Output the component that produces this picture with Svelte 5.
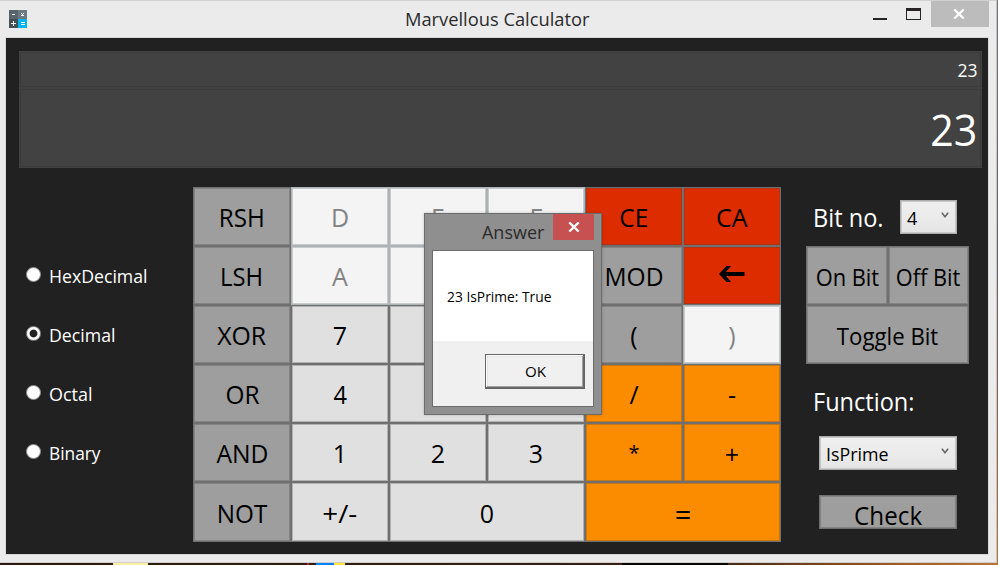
<script>
  const keys = [
    { t: 'RSH', k: 'op', w: 46 }, { t: 'D', k: 'off' }, { t: 'E', k: 'off' }, { t: 'F', k: 'off' }, { t: 'CE', k: 'red', w: 29 }, { t: 'CA', k: 'red', w: 31.5 },
    { t: 'LSH', k: 'op', w: 43 }, { t: 'A', k: 'off' }, { t: 'B', k: 'off' }, { t: 'C', k: 'off' }, { t: 'MOD', k: 'op', w: 59 }, { t: '', k: 'red', arrow: true },
    { t: 'XOR', k: 'op', w: 49 }, { t: '7', k: 'num' }, { t: '8', k: 'num' }, { t: '9', k: 'num' }, { t: '(', k: 'op' }, { t: ')', k: 'off' },
    { t: 'OR', k: 'op', w: 34 }, { t: '4', k: 'num', w: 13.5 }, { t: '5', k: 'num' }, { t: '6', k: 'num' }, { t: '/', k: 'math' }, { t: '-', k: 'math' },
    { t: 'AND', k: 'op', w: 52 }, { t: '1', k: 'num' }, { t: '2', k: 'num' }, { t: '3', k: 'num' }, { t: '*', k: 'math', small: true }, { t: '+', k: 'math', low: true },
    { t: 'NOT', k: 'op', w: 50.5 }, { t: '+/-', k: 'num', w: 35 }, { t: '0', k: 'num', wide: true }, { t: '=', k: 'math', wide: true, big: true }
  ];
  const modes = [
    { t: 'HexDecimal', w: 98.5 },
    { t: 'Decimal', w: 66.5 },
    { t: 'Octal', w: 43.5 },
    { t: 'Binary', w: 51.5 }
  ];
  let mode = $state('Decimal');

  // Condenses a label horizontally to the given advance width.
  function fit(node, w) {
    if (!w) return;
    node.style.transform = `scaleX(${w / node.getBoundingClientRect().width})`;
  }
</script>

{#snippet chevron()}
  <svg class="chev" width="8" height="7" viewBox="0 0 8 7"><path d="M0.6 0.6 L1.8 0.6 L4 3.4 L6.2 0.6 L7.4 0.6 L7.4 1.8 L4 6 L0.6 1.8Z" fill="#666" /></svg>
{/snippet}

<div class="desktop">
  <div class="window">
    <header>
      <svg class="logo" width="18" height="18" viewBox="0 0 18 18" shape-rendering="crispEdges">
        <rect width="9" height="9" fill="#56646c" /><rect x="9" width="9" height="9" fill="#6c7a82" />
        <rect y="9" width="9" height="9" fill="#444f56" /><rect x="9" y="9" width="9" height="9" fill="#00b4f4" />
        <path d="M3 4h3v1h-3zM12 3h1v1h-1zM14 3h1v1h-1zM13 4h1v1h-1zM12 5h3v1h-3zM2 13h5v1h-5zM4 11h1v5h-1zM12 12h4v1h-4zM12 14h4v1h-4z" fill="#fff" />
      </svg>
      <h1><span class="lab left" use:fit={184.5}>Marvellous Calculator</span></h1>
      <svg class="min" width="14" height="2"><rect width="14" height="2" fill="#262226" /></svg>
      <svg class="max" width="15" height="12"><path d="M0 0h15v12h-15zM1 3v8h13v-8z" fill="#262226" fill-rule="evenodd" /></svg>
      <button class="close" aria-label="Close"><svg width="12" height="10" viewBox="0 0 12 10"><path d="M1.3 0.5L10.7 9.5M10.7 0.5L1.3 9.5" stroke="#fff" stroke-width="2.3" /></svg></button>
    </header>
    <main>
      <section class="display">
        <div class="history"><span class="lab right" use:fit={20}>23</span></div>
        <div class="result"><span class="lab right" use:fit={47}>23</span></div>
      </section>
      <div class="body">
        <div class="modes">
          {#each modes as m}
            <button class="mode" onclick={() => (mode = m.t)}>
              <i class:on={mode === m.t}></i><span class="lab left" use:fit={m.w}>{m.t}</span>
            </button>
          {/each}
        </div>
        <div class="pad">
          {#each keys as key}
            <button class="key {key.k}" class:wide={key.wide} class:big={key.big} class:small={key.small} class:low={key.low}>
              {#if key.arrow}
                <svg width="26" height="16" viewBox="0 0 26 16"><path d="M0 8L7.5 0H12L7 6H25.5V10H7L12 16H7.5Z" fill="#000" /></svg>
              {:else}<span class="lab" use:fit={key.w}>{key.t}</span>{/if}
            </button>
          {/each}
        </div>
        <aside>
          <div class="bitrow">
            <span class="head"><span class="lab left" use:fit={70.5}>Bit no.</span></span>
            <button class="select bit"><span class="lab left">4</span>{@render chevron()}</button>
          </div>
          <div class="bits">
            <button class="key op"><span class="lab" use:fit={63.5}>On Bit</span></button>
            <button class="key op"><span class="lab" use:fit={64.5}>Off Bit</span></button>
            <button class="key op wide"><span class="lab" use:fit={101.5}>Toggle Bit</span></button>
          </div>
          <div class="head fn"><span class="lab left" use:fit={101.5}>Function:</span></div>
          <button class="select func"><span class="lab left" use:fit={62.5}>IsPrime</span>{@render chevron()}</button>
          <button class="key op check"><span class="lab" use:fit={68}>Check</span></button>
        </aside>
      </div>
    </main>
  </div>
  <div class="dialog">
    <div class="dtitle">
      <span class="lab" use:fit={62.5}>Answer</span>
      <button class="dclose" aria-label="Close"><svg width="12" height="10" viewBox="0 0 12 10"><path d="M1.3 0.5L10.7 9.5M10.7 0.5L1.3 9.5" stroke="#fff" stroke-width="2.3" /></svg></button>
    </div>
    <div class="dbody">
      <p><span class="lab left" use:fit={104.5}>23 IsPrime: True</span></p>
      <div class="dfoot"><button class="ok"><span class="lab" use:fit={21}>OK</span></button></div>
    </div>
  </div>
</div>

<style>
  :global(body) { overflow: hidden; }
  .desktop, .desktop * { box-sizing: border-box; }
  .desktop {
    position: relative; width: 998px; height: 565px; padding-right: 1px;
    font-family: "Open Sans", "Noto Sans", sans-serif; color: #fff;
    background:
      linear-gradient(90deg, transparent 113px, #fdeea0 113px 148px, transparent 148px 307px, #c8203c 307px 309px, transparent 309px 316px, #0a80f8 316px 334px, #ffe43c 334px 345px, transparent 345px 622px, #080402 622px 728px, transparent 728px) 0 563px / 997px 2px no-repeat,
      linear-gradient(90deg, #2a190e, #3a2012 70%, #a05a24 90%, #b87434) 0 563px / 997px 2px no-repeat,
      linear-gradient(#77747c, #66606c 45%, #8a6250 70%, #b87434);
  }
  button { font: inherit; color: inherit; padding: 0; border: 0; background: none; border-radius: 0; }
  .lab { display: inline-block; white-space: pre; line-height: 1; }
  .left { transform-origin: left; }
  .right { transform-origin: right; }
  .window {
    height: 563px; padding: 0 8px 7px 5px; background: #ebebeb;
    border-top: 1px solid #d0d0d0; border-right: 1px solid #c4c4c4; border-bottom: 1px solid #cfcfcf;
  }
  header { height: 36px; display: flex; align-items: flex-start; color: #2b2b2b; }
  .logo { margin: 9px 0 0 4px; }
  h1 { margin: 9px 0 0 378px; width: 468px; font-size: 18px; font-weight: 400; line-height: 18px; }
  .min { margin-top: 17px; }
  .max { margin: 7px 0 0 19px; }
  header svg, .close { flex: none; }
  .close { width: 58px; height: 26px; margin-left: 10px; background: #bcbcbc; display: grid; place-items: center; }
  .close svg { margin-right: 2px; }
  .min, .max, .close { transform: translateX(1px); }
  main {
    width: 984px; height: 518px; border: 1px solid #d8d8d8; background: #212121;
    padding: 13px 5px 0 13px;
  }
  .display { width: 963px; height: 117px; background: #424242; padding: 1px; display: flex; flex-direction: column; gap: 2px; }
  .display div { border: 1px solid #3b3b3b; display: flex; justify-content: flex-end; align-items: center; }
  .history { height: 35px; font-size: 18px; padding: 0 2px 0 0; }
  .result { flex: 1; font-size: 44px; padding: 1px 3px 0 0; }
  .body { display: flex; margin-top: 19px; height: 355px; }
  .modes { width: 174px; padding: 58px 0 0 7px; display: flex; flex-direction: column; }
  .mode { height: 59px; display: flex; align-items: center; font-size: 18px; text-align: left; }
  .mode i {
    width: 15px; height: 15px; border-radius: 50%; margin-right: 8px;
    background: #fff; border: 1px solid #8a8a8a;
  }
  .mode i.on { background: radial-gradient(circle, #212121 3.4px, #fff 4.4px); }
  .mode .lab { margin-top: 2px; }
  .pad { width: 588px; display: grid; grid-template-columns: repeat(6, 1fr); grid-template-rows: repeat(5, 59px) 60px; }
  .key {
    display: flex; align-items: center; justify-content: center; min-width: 0; min-height: 0;
    border: 1px solid #707070; color: #000; font-size: 25px; padding-top: 2px;
    box-shadow: inset 0 0 0 1px rgba(70, 70, 70, .3);
  }
  .wide { grid-column: span 2; }
  .op { background: #9e9e9e; }
  .num { background: #e0e0e0; }
  .red { background: #dd2c00; }
  .red svg { margin-bottom: 5px; }
  .math { background: #fb8c00; }
  .off { background: #f4f4f4; color: #838383; border-color: #adb2b5; box-shadow: inset 0 0 0 1px #c8cbcc; }
  .big { font-size: 29px; padding-top: 3px; }
  .small { font-size: 20px; padding-top: 0; }
  .low { padding-top: 3px; }
  aside { width: 176px; padding-left: 25px; }
  .bitrow { height: 59px; display: flex; align-items: flex-start; }
  .head { font-size: 25px; display: block; padding-left: 6.5px; }
  .bitrow .head { width: 94px; padding-top: 18px; line-height: 25px; }
  .select {
    height: 34px; display: flex; align-items: center; justify-content: space-between;
    border: 1px solid #acacac; box-shadow: inset 0 0 0 1px #c9c9c9; background: linear-gradient(#f0f0f0, #e5e5e5);
    color: #000; font-size: 18px; padding: 2px 7px 0 6px;
  }
  .chev { margin-bottom: 5px; }
  .bit { width: 57px; margin-top: 13px; }
  .bits { width: 163px; height: 118px; display: grid; grid-template: 1fr 1fr / 82px 81px; }
  .bits .key { font-size: 23px; padding-top: 3px; }
  .bits .wide { padding-left: 1px; }
  .fn { margin-top: 25px; line-height: 25px; height: 25px; }
  .func { width: 138px; margin: 22px 0 0 13px; }
  .check { width: 138px; height: 34px; margin: 25px 0 0 13px; padding-top: 7px; }
  .dialog {
    position: absolute; left: 424px; top: 213px; width: 178px; height: 202px;
    background: #8f8f8f; border: 1px solid #6c6c6c; padding: 0 7px;
    box-shadow: 0 0 3px rgba(0, 0, 0, .2); color: #000;
  }
  .dtitle { height: 36px; display: flex; align-items: flex-start; justify-content: flex-end; font-size: 18px; color: #2b2b2b; }
  .dtitle .lab { margin: 9px 9px 0 0; }
  .dclose { width: 41px; height: 26px; background: #c75050; display: grid; place-items: center; }
  .dbody { height: 157px; border: 1px solid #6c6c6c; background: #fff; display: flex; flex-direction: column; }
  p { margin: 0; height: 90px; padding: 38px 0 0 14px; font-size: 15px; line-height: 15px; }
  .dfoot { flex: 1; background: #f0f0f0; padding: 13px 8px 0 0; display: flex; justify-content: flex-end; align-items: flex-start; }
  .ok {
    width: 100px; height: 35px; font-size: 15px; display: grid; place-items: center; background: #f0f0f0;
    border: 1px solid #646464; box-shadow: inset -1px -1px #696969, inset 1px 1px #fff, inset -2px -2px #a0a0a0, inset 2px 2px #e3e3e3;
  }
</style>
